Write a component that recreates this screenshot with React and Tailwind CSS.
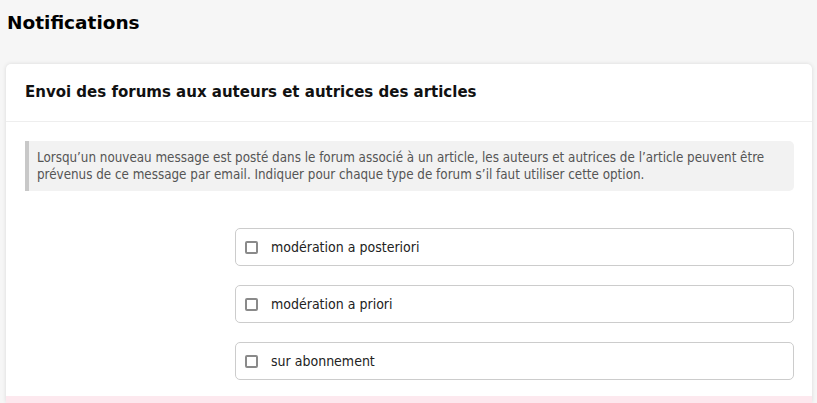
const options = ["modération a posteriori", "modération a priori", "sur abonnement"];

export default function App() {
  return (
    <div className="min-h-[403px] bg-[#f6f6f6] pl-[6px] pr-[5px] font-['DejaVu_Sans',sans-serif] overflow-hidden">
      <h1 className="pt-[11px] pl-[1px] text-[18.5px] font-bold leading-[24px] text-black">Notifications</h1>
      <div className="mt-[29px] rounded-[5px] bg-white shadow-[0_0_4px_rgba(0,0,0,0.12)]">
        <div className="flex h-[58px] items-center border-b border-[#eeeeee] pl-[19px] pr-[18px]">
          <h2 className="text-[15px] font-bold text-[#111]">Envoi des forums aux auteurs et autrices des articles</h2>
        </div>
        <div className="pl-[19px] pr-[18px] pt-[19px]">
          <div className="rounded-r-[5px] border-l-4 border-[#c8c8c8] bg-[#f2f2f2] py-[8px] pl-[8px] pr-3 font-['DejaVu_Sans_Condensed','DejaVu_Sans',sans-serif] text-[13.3px] leading-[17px] text-[#555]">
            Lorsqu’un nouveau message est posté dans le forum associé à un article, les auteurs et autrices de l’article peuvent être prévenus de ce message par email. Indiquer pour chaque type de forum s’il faut utiliser cette option.
          </div>
          <div className="flex flex-col gap-[19px] pt-[37px] pl-[210px] pb-[16px]">
            {options.map((o) => (
              <label key={o} className="flex h-[38px] items-center gap-[13px] rounded-[5px] border border-[#cccccc] pl-[9px]">
                <span className="h-[13px] w-[13px] rounded-[2px] border-2 border-[#8a8a8a] bg-white" />
                <span className="font-['DejaVu_Sans_Condensed','DejaVu_Sans',sans-serif] text-[14px] text-[#222]">{o}</span>
              </label>
            ))}
          </div>
        </div>
        <div className="h-[8px] bg-[#fde8ee]" />
      </div>
    </div>
  );
}
